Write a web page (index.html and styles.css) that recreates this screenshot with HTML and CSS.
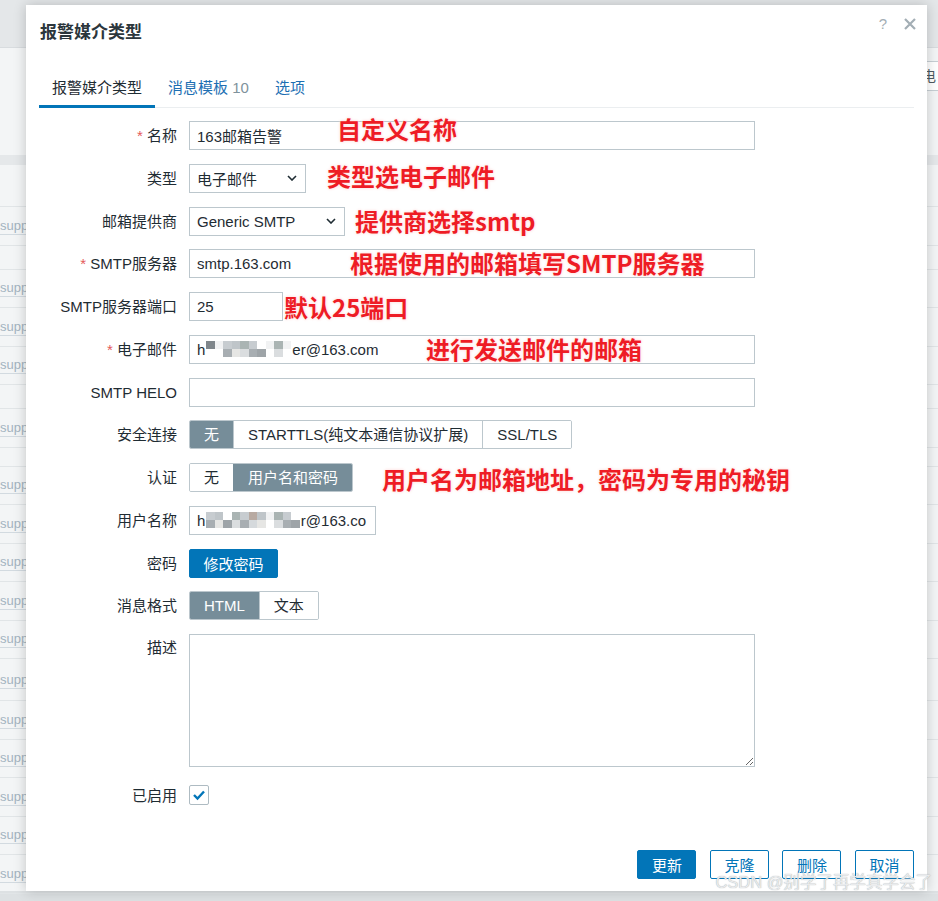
FILE: index.html
```html
<!DOCTYPE html>
<html lang="zh-CN">
<head>
    <meta charset="UTF-8">
    <meta name="viewport" content="width=device-width, initial-scale=1.0">
    <title>报警媒介类型</title>
    <link rel="stylesheet" href="styles.css">
</head>
<body>

<div class="page">
    <div class="page-head"></div>
    <div class="page-toolbar"><span class="page-btn">电</span></div>
    <div class="page-table">
        <div class="thead"></div>
        <div class="trow tall"></div>
        <div class="trow"><span>supp</span></div>
        <div class="trow short"></div>
        <div class="trow"><span>supp</span></div>
        <div class="trow"><span>supp</span></div>
        <div class="trow"><span>supp</span></div>
        <div class="trow short"></div>
        <div class="trow"><span>supp</span></div>
        <div class="trow tiny"></div>
        <div class="trow"><span>supp</span></div>
        <div class="trow"><span>supp</span></div>
        <div class="trow"><span>supp</span></div>
        <div class="trow"><span>supp</span></div>
        <div class="trow"><span>supp</span></div>
        <div class="trow tall"><span>supp</span></div>
        <div class="trow"><span>supp</span></div>
        <div class="trow"><span>supp</span></div>
        <div class="trow"><span>supp</span></div>
        <div class="trow"><span>supp</span></div>
        <div class="trow"><span>supp</span></div>
    </div>
</div>

<div class="dialog">
    <div class="dialog-head">
        <h2>报警媒介类型</h2>
        <div class="dialog-tools">
            <span class="help">?</span>
            <svg class="close" width="12" height="12" viewBox="0 0 12 12">
                <path d="M1 1 L11 11 M11 1 L1 11" stroke="#a3aeb5" stroke-width="2.2" fill="none"/>
            </svg>
        </div>
    </div>

    <div class="tabs">
        <span class="tab active">报警媒介类型</span>
        <span class="tab">消息模板 <em>10</em></span>
        <span class="tab">选项</span>
    </div>

    <div class="form">
        <div class="row">
            <label class="lbl"><i class="req">*</i> 名称</label>
            <div class="ctl"><input class="input wide" value="163邮箱告警"></div>
            <span class="note n1">自定义名称</span>
        </div>
        <div class="row">
            <label class="lbl">类型</label>
            <div class="ctl">
                <div class="select sel-type">电子邮件
                    <svg width="10" height="6" viewBox="0 0 10 6"><path d="M1 1 L5 5 L9 1" stroke="#1f2c33" stroke-width="1.6" fill="none"/></svg>
                </div>
            </div>
            <span class="note n2">类型选电子邮件</span>
        </div>
        <div class="row">
            <label class="lbl">邮箱提供商</label>
            <div class="ctl">
                <div class="select sel-provider">Generic SMTP
                    <svg width="10" height="6" viewBox="0 0 10 6"><path d="M1 1 L5 5 L9 1" stroke="#1f2c33" stroke-width="1.6" fill="none"/></svg>
                </div>
            </div>
            <span class="note n3">提供商选择smtp</span>
        </div>
        <div class="row">
            <label class="lbl"><i class="req">*</i> SMTP服务器</label>
            <div class="ctl"><input class="input wide" value="smtp.163.com"></div>
            <span class="note n4">根据使用的邮箱填写SMTP服务器</span>
        </div>
        <div class="row">
            <label class="lbl">SMTP服务器端口</label>
            <div class="ctl"><input class="input port" value="25"></div>
            <span class="note n5">默认25端口</span>
        </div>
        <div class="row">
            <label class="lbl"><i class="req">*</i> 电子邮件</label>
            <div class="ctl">
                <div class="input wide fake">h<span class="blur">
                    <b class="px-d"></b><b class="px-w"></b><b class="px-a"></b><b class="px-b"></b><b class="px-c"></b><b class="px-a"></b><b class="px-e"></b><b class="px-w"></b><b class="px-c"></b><b class="px-w"></b>
                </span>er@163.com</div>
            </div>
            <span class="note n6">进行发送邮件的邮箱</span>
        </div>
        <div class="row">
            <label class="lbl">SMTP HELO</label>
            <div class="ctl"><input class="input wide" value=""></div>
        </div>
        <div class="row">
            <label class="lbl">安全连接</label>
            <div class="ctl">
                <div class="seg">
                    <span class="on">无</span>
                    <span>STARTTLS(纯文本通信协议扩展)</span>
                    <span>SSL/TLS</span>
                </div>
            </div>
        </div>
        <div class="row">
            <label class="lbl">认证</label>
            <div class="ctl">
                <div class="seg">
                    <span>无</span>
                    <span class="on">用户名和密码</span>
                </div>
            </div>
            <span class="note n7">用户名为邮箱地址，密码为专用的秘钥</span>
        </div>
        <div class="row">
            <label class="lbl">用户名称</label>
            <div class="ctl">
                <div class="input user fake">h<span class="blur">
                    <b class="px-a"></b><b class="px-b"></b><b class="px-e"></b><b class="px-c"></b><b class="px-a"></b><b class="px-f"></b><b class="px-b"></b><b class="px-w"></b><b class="px-c"></b><b class="px-a"></b><b class="px-e"></b>
                </span>r@163.co</div>
            </div>
        </div>
        <div class="row">
            <label class="lbl">密码</label>
            <div class="ctl"><button class="btn btn-blue">修改密码</button></div>
        </div>
        <div class="row">
            <label class="lbl">消息格式</label>
            <div class="ctl">
                <div class="seg">
                    <span class="on">HTML</span>
                    <span>文本</span>
                </div>
            </div>
        </div>
        <div class="row row-text">
            <label class="lbl">描述</label>
            <div class="ctl"><textarea class="input wide area"></textarea></div>
        </div>
        <div class="row">
            <label class="lbl">已启用</label>
            <div class="ctl">
                <span class="check">
                    <svg width="14" height="12" viewBox="0 0 14 12"><path d="M2 6 L5.5 9.5 L12 2.5" stroke="#0275b8" stroke-width="2.4" fill="none"/></svg>
                </span>
            </div>
        </div>
    </div>

    <div class="footer">
        <button class="btn btn-blue">更新</button>
        <button class="btn btn-line">克隆</button>
        <button class="btn btn-line">删除</button>
        <button class="btn btn-line">取消</button>
    </div>
</div>

<div class="watermark">CSDN @别学了再学真学会了</div>

</body>
</html>
```

FILE: styles.css
```css
* {
    margin: 0;
    padding: 0;
    box-sizing: border-box;
}
body {
    font-family: "Liberation Sans", "Noto Sans CJK SC", sans-serif;
    font-size: 15px;
    color: #1f2c33;
    background: #dde1e3;
    width: 938px;
    height: 901px;
    overflow: hidden;
    position: relative;
}

/* page behind the dialog */
.page {
    height: 891px;
    background: #f3f5f6;
}
.page-head {
    height: 48px;
    background: #e4e7e9;
    border-bottom: 1px solid #d8dcdf;
}
.page-toolbar {
    height: 107px;
    display: flex;
    justify-content: flex-end;
    align-items: flex-start;
    padding-top: 13px;
}
.page-btn {
    width: 21px;
    height: 30px;
    background: #fff;
    border: 1px solid #c7cfd4;
    border-right: none;
    line-height: 28px;
    padding-left: 4px;
    color: #4f5a60;
    font-size: 14px;
    overflow: hidden;
    white-space: nowrap;
}
.thead {
    height: 10px;
    background: #e5e8ea;
}
.trow {
    height: 38.5px;
    border-bottom: 1px solid #e1e5e7;
    display: flex;
    align-items: center;
}
.trow.tall { height: 42px; }
.trow.short { height: 24px; }
.trow.tiny { height: 19px; }
.trow span {
    font-size: 13px;
    color: #a3b3bf;
    line-height: 17px;
    border-bottom: 1px solid #d2dae0;
}

/* dialog */
.dialog {
    position: absolute;
    left: 26px;
    top: 5px;
    width: 901px;
    height: 886px;
    background: #fff;
    box-shadow: 0 0 12px rgba(0, 0, 0, 0.2);
    padding: 0 13px;
    display: flex;
    flex-direction: column;
}
.dialog-head {
    height: 51px;
    display: flex;
    justify-content: space-between;
    align-items: center;
    padding-left: 1px;
}
.dialog-head h2 {
    font-family: "Noto Sans CJK SC", sans-serif;
    font-size: 17px;
    font-weight: bold;
    color: #2b363c;
}
.dialog-tools {
    align-self: flex-start;
    margin-top: 10px;
    margin-right: -2px;
    display: flex;
    align-items: center;
    gap: 17px;
}
.help {
    color: #a3aeb5;
    font-size: 15px;
}

.tabs {
    margin-top: 15px;
    display: flex;
    border-bottom: 1px solid #ebeef0;
}
.tab {
    height: 37px;
    line-height: 34px;
    padding: 0 13px;
    margin-bottom: -1px;
    border-bottom: 3px solid transparent;
    color: #1d6fb3;
}
.tab.active {
    color: #1f2c33;
    border-bottom-color: #0275b8;
}
.tab em {
    font-style: normal;
    color: #7f929c;
}

/* form */
.form {
    margin-top: 13px;
}
.row {
    position: relative;
    display: grid;
    grid-template-columns: 138px 1fr;
    column-gap: 12px;
    min-height: 29px;
    margin-bottom: 13.75px;
}
.lbl {
    text-align: right;
    line-height: 29px;
    white-space: nowrap;
}
.req {
    font-style: normal;
    color: #e45959;
}
.ctl {
    display: flex;
    align-items: center;
}
.input {
    height: 29px;
    border: 1px solid #bcc7cd;
    padding: 0 7px;
    font: inherit;
    color: #1f2c33;
    background: #fff;
    outline: none;
}
.wide { width: 566px; }
.port { width: 94px; }
.user { width: 187px; }
.fake {
    display: flex;
    align-items: center;
    white-space: nowrap;
    overflow: hidden;
}
.area {
    height: 133px;
    resize: vertical;
}
.row-text .lbl {
    line-height: 28px;
}

.blur {
    display: inline-flex;
    height: 16px;
    margin: 0 1px;
}
.blur b {
    display: block;
    width: 8.5px;
    height: 16px;
}
.px-a { background: linear-gradient(#c7ccd0 50%, #a8aeb2 50%); }
.px-b { background: linear-gradient(#bfc5c9 50%, #e6e6e4 50%); }
.px-c { background: linear-gradient(#aab4b3 50%, #dadddf 50%); }
.px-d { background: linear-gradient(#7f868b 50%, #ffffff 50%); }
.px-e { background: linear-gradient(#ffffff 50%, #9ea4a8 50%); }
.px-f { background: linear-gradient(#b8aaa2 50%, #d5d9dc 50%); }
.px-w { background: linear-gradient(#f1f2f3 50%, #ffffff 50%); }

.select {
    height: 29px;
    border: 1px solid #bcc7cd;
    padding: 0 8px 0 7px;
    display: flex;
    align-items: center;
    justify-content: space-between;
    background: #fff;
}
.sel-type { width: 117px; }
.sel-provider { width: 156px; }

.seg {
    display: inline-flex;
    height: 29px;
    border: 1px solid #bcc7cd;
    border-radius: 2px;
    overflow: hidden;
}
.seg span {
    padding: 0 14px;
    line-height: 27px;
    border-left: 1px solid #bcc7cd;
    background: #fff;
    white-space: nowrap;
}
.seg span:first-child {
    border-left: none;
}
.seg .on {
    background: #768d99;
    border-color: #768d99;
    color: #fff;
}

.btn {
    height: 29px;
    padding: 0 13.5px;
    font: inherit;
    border: 1px solid #0275b8;
    border-radius: 2px;
    cursor: pointer;
}
.btn-blue {
    background: #0275b8;
    color: #fff;
}
.btn-line {
    background: #fff;
    color: #0275b8;
}

.check {
    width: 20px;
    height: 20px;
    border: 1px solid #aebbc2;
    border-radius: 2px;
    display: flex;
    align-items: center;
    justify-content: center;
}

/* red notes drawn over the screenshot */
.note {
    position: absolute;
    top: 0;
    line-height: 29px;
    font-family: "Noto Sans CJK SC", sans-serif;
    font-size: 24px;
    font-weight: bold;
    color: #ee1c25;
    white-space: nowrap;
    text-shadow: 0 0 2px #fff, 0 0 3px rgba(255, 190, 190, 0.9);
}
.n1 { left: 298px; top: -7px; }
.n2 { left: 288px; top: -3px; }
.n3 { left: 316px; top: -1px; }
.n4 { left: 311px; top: -1px; }
.n5 { left: 245px; top: 0; }
.n6 { left: 387px; top: -1px; }
.n7 { left: 343px; top: 1px; }

.footer {
    margin-top: auto;
    padding-bottom: 12px;
    display: flex;
    justify-content: flex-end;
    gap: 13.5px;
}

.watermark {
    position: absolute;
    right: 6px;
    bottom: 8px;
    font-size: 16.5px;
    color: #e9ebed;
    text-shadow: 0 0 1px rgba(110, 118, 125, 0.7);
    white-space: nowrap;
}
```
